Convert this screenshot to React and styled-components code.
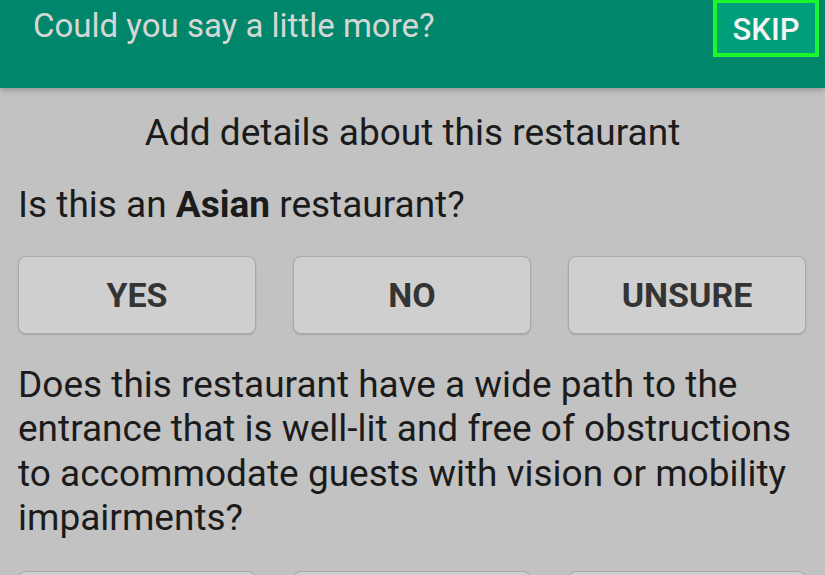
import React from 'react'
import styled, { createGlobalStyle } from 'styled-components'

const GlobalStyle = createGlobalStyle`
  html, body {
    margin: 0;
    padding: 0;
    background: #c2c2c2;
    font-family: Roboto, "Liberation Sans", sans-serif;
    overflow: hidden;
  }
`

const Page = styled.div`
  width: 825px;
  height: 575px;
  background: #c2c2c2;
  overflow: hidden;
`

const Header = styled.div`
  height: 88px;
  background: #00866a;
  display: flex;
  justify-content: space-between;
  align-items: flex-start;
  padding: 0 6px 0 33px;
  box-sizing: border-box;
  box-shadow: 0 2px 6px rgba(0, 0, 0, 0.25);
  position: relative;
`

const HeaderTitle = styled.div`
  color: #d5d7d6;
  font-size: 33px;
  line-height: 33px;
  margin-top: 9px;
`

const Skip = styled.div`
  width: 106px;
  height: 58px;
  margin-top: -1px;
  box-sizing: border-box;
  border: 4px solid #1df52c;
  background: #009e7a;
  color: #f4f4f4;
  font-size: 31px;
  font-weight: 500;
  display: flex;
  align-items: center;
  justify-content: center;
  padding-top: 2px;
`

const Body = styled.div`
  padding: 23px 10px 0 18px;
  color: #1b1b1b;
`

const Heading = styled.div`
  text-align: center;
  font-size: 37px;
  line-height: 44px;
  margin-right: 8px;
`

const Question = styled.div`
  font-size: 37px;
  line-height: 44px;
  margin-top: 28px;
  b {
    font-weight: 700;
  }
`

const LongQuestion = styled(Question)`
  line-height: 44.4px;
  margin-top: 29px;
`

const Choices = styled.div`
  width: 788px;
  display: flex;
  justify-content: space-between;
  margin-top: ${p => p.$top}px;
`

const Choice = styled.div`
  width: 238px;
  height: 78px;
  box-sizing: border-box;
  background: #cfcfcf;
  border: 1px solid #a9a9a9;
  border-radius: 8px;
  box-shadow: 0 1px 2px rgba(0, 0, 0, 0.15);
  display: flex;
  align-items: center;
  justify-content: center;
  font-size: 34px;
  font-weight: 700;
  color: #343434;
`

const options = ['YES', 'NO', 'UNSURE']

export default function App() {
  return (
    <Page>
      <GlobalStyle />
      <Header>
        <HeaderTitle>Could you say a little more?</HeaderTitle>
        <Skip>SKIP</Skip>
      </Header>
      <Body>
        <Heading>Add details about this restaurant</Heading>
        <Question>
          Is this an <b>Asian</b> restaurant?
        </Question>
        <Choices $top={29}>
          {options.map(o => (
            <Choice key={o}>{o}</Choice>
          ))}
        </Choices>
        <LongQuestion>
          Does this restaurant have a wide path to the entrance that is well-lit and free of obstructions to accommodate guests with vision or mobility impairments?
        </LongQuestion>
        <Choices $top={30}>
          {options.map(o => (
            <Choice key={o}>{o}</Choice>
          ))}
        </Choices>
      </Body>
    </Page>
  )
}
